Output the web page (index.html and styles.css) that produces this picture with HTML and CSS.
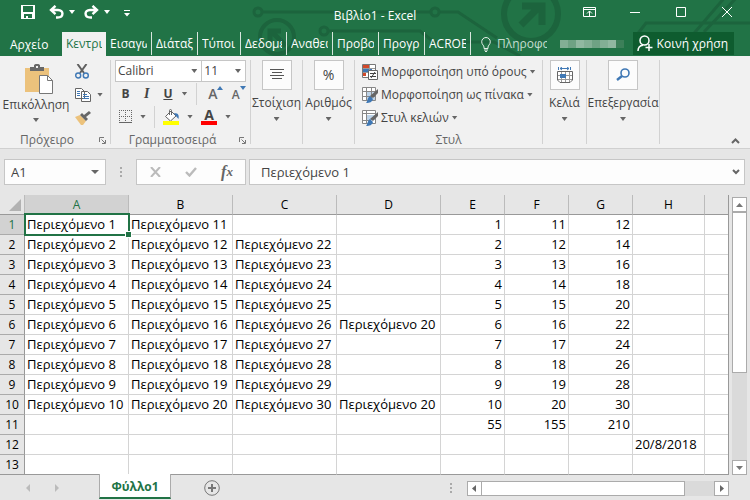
FILE: index.html
```html
<!DOCTYPE html>
<html lang="el">
<head>
<meta charset="utf-8">
<title>Βιβλίο1 - Excel</title>
<link rel="stylesheet" href="styles.css">
</head>
<body>
<div class="app">
  <header class="top">
    <svg class="circuit" width="500" height="56" viewBox="250 0 500 56" fill="none" stroke="#1c643d" stroke-width="3" aria-hidden="true">
      <circle cx="258" cy="12" r="4"/><path d="M262 12H431M439 12H458L497 38"/><circle cx="435" cy="12" r="4"/>
      <circle cx="324" cy="31" r="4"/><path d="M328 31H420L434 42H494L520 56M386 42H420"/>
      <circle cx="277" cy="37" r="17" stroke-width="4"/><path d="M286 46L271 31M270 42V31H281" stroke-width="5"/>
      <circle cx="531" cy="14" r="27" stroke-width="6"/><path d="M521 25L541 5M522 6H542V25" stroke-width="7"/>
      <path d="M636 36L646 23H750M690 38L726 -4M704 32L738 -4"/>
    </svg>
    <div class="titlebar">
      <div class="quick">
        <button class="qbtn save" aria-label="Αποθήκευση"><svg width="14" height="14" viewBox="0 0 14 14"><path fill="#fff" fill-rule="evenodd" d="M0 0H14V14H0ZM2 1V7H12V1ZM3 9V13H5V11H7V13H11V9Z"/></svg></button>
        <button class="qbtn undo" aria-label="Αναίρεση"><svg width="15" height="14" viewBox="0 0 15 14" fill="none" stroke="#fff" stroke-width="2.400"><path d="M6.500 .8L2 5L6.500 9.200M2 5H9C15 5 15 12.500 8.500 12.500H7"/></svg></button>
        <span class="tri light"></span>
        <button class="qbtn redo" aria-label="Επανάληψη"><svg width="15" height="14" viewBox="0 0 15 14" fill="none" stroke="#fff" stroke-width="2.400"><path d="M8.500 .8L13 5L8.500 9.200M13 5H6C0 5 0 12.500 6.500 12.500H8"/></svg></button>
        <span class="tri light"></span>
        <button class="qbtn more" aria-label="Προσαρμογή"><svg width="6" height="7" viewBox="0 0 6 7" fill="#fff"><path d="M0 0H6V1H0ZM0 3H6L3 6.500Z"/></svg></button>
      </div>
      <h1>Βιβλίο1 - Excel</h1>
      <div class="winctl">
        <button aria-label="Επιλογές κορδέλας"><svg width="13" height="10" viewBox="0 0 13 10" fill="none" stroke="#fff"><path d="M.5.5H12.500V9.500H.5ZM.5 2.500H12.500M6.500 9V4M4 6.500L6.500 4L9 6.500"/></svg></button>
        <button aria-label="Ελαχιστοποίηση"><svg width="10" height="10" viewBox="0 0 10 10" stroke="#fff"><path d="M0 5.500H10"/></svg></button>
        <button aria-label="Μεγιστοποίηση"><svg width="10" height="10" viewBox="0 0 10 10" fill="none" stroke="#fff"><path d="M.5.5H9.500V9.500H.5Z"/></svg></button>
        <button aria-label="Κλείσιμο"><svg width="10" height="10" viewBox="0 0 10 10" stroke="#fff"><path d="M0 0L10 10M10 0L0 10"/></svg></button>
      </div>
    </div>
    <nav class="tabs">
      <a class="file" href="#">Αρχείο</a>
      <a class="tab active" href="#"><span>Κεντρικ</span></a>
      <a class="tab" href="#"><span>Εισαγω</span></a>
      <a class="tab" href="#"><span>Διάταξ</span></a>
      <a class="tab short" href="#"><span>Τύποι</span></a>
      <a class="tab" href="#"><span>Δεδομέ</span></a>
      <a class="tab" href="#"><span>Αναθεώ</span></a>
      <a class="tab" href="#"><span>Προβο</span></a>
      <a class="tab" href="#"><span>Προγρ</span></a>
      <a class="tab" href="#"><span>ACROB</span></a>
      <a class="tell" href="#"><svg width="10" height="15" viewBox="0 0 10 15" fill="none" stroke="#e4efe8"><path d="M3 11.500V10C3 8.500.7 7.500.7 4.800A4.300 4.300 0 0 1 9.300 4.800C9.300 7.500 7 8.500 7 10V11.500ZM3 13H7M4 14.500H6"/></svg><span>Πληροφο</span></a>
      <span class="mosaic"><i></i><i></i><i></i><i></i><i></i><i></i><i></i><i></i></span>
      <button class="share"><svg width="16" height="17" viewBox="0 0 16 17" fill="none" stroke="#fff" stroke-width="1.500"><circle cx="7.500" cy="5.500" r="4.500"/><path d="M1 16C1 12.500 3 10.500 6 10.200M12 9V16M8.500 12.500H15.500"/></svg>Κοινή χρήση</button>
    </nav>
  </header>

  <section class="ribbon">
    <div class="group clip">
      <div class="content">
        <button class="big paste">
          <svg width="28" height="31" viewBox="0 0 28 31"><path fill="#ecc27c" d="M0 4H24V28H0Z"/><path fill="#686868" d="M5 7V3H9V1L10.500 0H13.500L15 1V3H19V7Z"/><path fill="#f1f1f1" d="M11 2H13V4H11Z"/><path fill="#fff" stroke="#777" d="M14.500 11.500H22.500L27.500 16.500V29.500H14.500Z"/><path fill="none" stroke="#777" d="M22.500 11.500V16.500H27.500"/></svg>
          <span>Επικόλληση</span><span class="tri"></span>
        </button>
        <div class="stack">
          <button aria-label="Αποκοπή"><svg width="14" height="15" viewBox="0 0 14 15" fill="none"><path stroke="#606060" stroke-width="2" d="M2.500 0L9 9M11.500 0L5 9"/><circle cx="3.200" cy="11.500" r="2.500" stroke="#3f78b5" stroke-width="1.400"/><circle cx="10.800" cy="11.500" r="2.500" stroke="#3f78b5" stroke-width="1.400"/></svg></button>
          <button aria-label="Αντιγραφή"><svg width="16" height="14" viewBox="0 0 16 14"><path fill="#fff" stroke="#666" d="M.5.5H6.500L9.500 3.500V10.500H.5ZM6.500 3.500H12.500L15.500 6.500V13.500H6.500Z"/><path stroke="#3f78b5" d="M2 3.500H5M2 5.500H5M2 7.500H5M8 6.500H12M8 8.500H14M8 10.500H14"/></svg><span class="tri"></span></button>
          <button aria-label="Πινέλο μορφοποίησης"><svg width="16" height="14" viewBox="0 0 16 14"><path fill="#ecc27c" d="M0 6L5 4L11 10L8 14H6Z"/><path fill="#666" d="M5 4L7 2L9 4L14 0L16 2L11 6L13 8L11 10Z"/></svg></button>
        </div>
      </div>
      <div class="caption"><span>Πρόχειρο</span><svg class="launch" width="7" height="7" viewBox="0 0 7 7" fill="none" stroke="#777"><path d="M.5 5V.5H5M2.500 2.500L6 6M6.500 3V6.500H3"/></svg></div>
    </div>

    <div class="group font">
      <div class="content rows">
        <div class="combos">
          <div class="combo face"><select aria-label="Γραμματοσειρά"><option>Calibri</option></select><span class="tri"></span></div>
          <div class="combo size"><select aria-label="Μέγεθος"><option>11</option></select><span class="tri"></span></div>
        </div>
        <div class="tools one">
          <button class="bold">B</button><button class="ital">I</button><button class="under">U</button><span class="tri"></span><span class="vline"></span>
          <button class="grow" aria-label="Μεγαλύτερα">A<svg width="6" height="4" viewBox="0 0 6 4"><path fill="#3f78b5" d="M0 4L3 0L6 4Z"/></svg></button>
          <button class="grow small" aria-label="Μικρότερα">A<svg width="6" height="4" viewBox="0 0 6 4"><path fill="#3f78b5" d="M0 0H6L3 4Z"/></svg></button>
        </div>
        <div class="tools two">
          <button aria-label="Περιγράμματα"><svg width="13" height="14" viewBox="0 0 13 14" fill="none" stroke="#666"><path stroke-dasharray="1 1" d="M0 .5H13M0 6.500H13M.5 0V12M6.500 0V12M12.500 0V12"/><path d="M0 12.500H13"/></svg></button><span class="tri"></span><span class="vline"></span>
          <button aria-label="Χρώμα γεμίσματος"><svg width="16" height="16" viewBox="0 0 16 16"><path fill="#fff" stroke="#666" d="M2.500 7.500L8 2L13 7L7.500 12ZM6.500 6V1.500Q6.500.5 7.500.5T8.500 1.500V6"/><path fill="#3f78b5" d="M11 4C16 4 16 7 15.500 10L12 6Z"/><path fill="#ff0" d="M0 12H16V16H0Z"/></svg></button><span class="tri"></span>
          <button class="colour" aria-label="Χρώμα γραμματοσειράς"><b>A</b></button><span class="tri"></span>
        </div>
      </div>
      <div class="caption"><span>Γραμματοσειρά</span><svg class="launch" width="7" height="7" viewBox="0 0 7 7" fill="none" stroke="#777"><path d="M.5 5V.5H5M2.500 2.500L6 6M6.500 3V6.500H3"/></svg></div>
    </div>

    <div class="group narrow">
      <button class="tile"><span class="frame"><svg width="14" height="12" viewBox="0 0 14 12" stroke="#555"><path d="M0 .5H14M2 3.500H12M0 6.500H14M2 9.500H12"/></svg></span><span>Στοίχιση</span><span class="tri"></span></button>
    </div>
    <div class="group narrow">
      <button class="tile"><span class="frame pct">%</span><span>Αριθμός</span><span class="tri"></span></button>
    </div>

    <div class="group styles">
      <div class="content list">
        <button><svg width="16" height="16" viewBox="0 0 16 16"><path fill="#fff" stroke="#777" d="M.5.5H13.500V13.500H.5Z"/><path fill="#d2492a" d="M1 1H7V4H1ZM1 9H4V12H1Z"/><path fill="#3f78b5" d="M1 5H10V8H1Z"/><path fill="none" stroke="#999" d="M1 4.500H13M1 8.500H8M7.500 1V8"/><path fill="#fff" stroke="#666" d="M6.500 6.500H15.500V15.500H6.500Z"/><path stroke="#444" d="M8 9.500H14M8 12.500H14M13 8L9 14"/></svg>Μορφοποίηση υπό όρους<span class="tri"></span></button>
        <button><svg width="16" height="16" viewBox="0 0 16 16"><path fill="#fff" stroke="#888" d="M.5.5H13.500V13.500H.5Z"/><path fill="#bdd3e8" d="M5 5H13V13H5Z"/><path fill="none" stroke="#888" d="M1 4.500H13M1 9.500H13M4.500 1V13M9.500 1V13"/><path fill="#666" d="M16 2V6L11 11L8 9Z"/><path fill="#3f78b5" d="M8 9L11 12C10 15 8 16 4 16C6 14 5 11 8 9Z"/></svg>Μορφοποίηση ως πίνακα<span class="tri"></span></button>
        <button><svg width="16" height="16" viewBox="0 0 16 16"><path fill="#fff" stroke="#888" d="M.5.5H13.500V13.500H.5Z"/><path fill="#bdd3e8" d="M5 5H13V10H5Z"/><path fill="none" stroke="#888" d="M1 3.500H13M1 10.500H8M4.500 1V13"/><path fill="#666" d="M16 2V6L11 11L8 9Z"/><path fill="#3f78b5" d="M8 9L11 12C10 15 8 16 4 16C6 14 5 11 8 9Z"/></svg>Στυλ κελιών<span class="tri"></span></button>
      </div>
      <div class="caption"><span>Στυλ</span></div>
    </div>

    <div class="group cells">
      <button class="tile"><span class="frame"><svg width="16" height="16" viewBox="0 0 16 16" fill="none"><path stroke="#3f78b5" d="M1.500 0V3M13.500 0V3M3 1.500H12M5 0L3 1.500L5 3M10 0L12 1.500L10 3"/><path fill="#fff" stroke="#666" d="M.5 4.500H15.500V13L13 15.500H3L.5 13Z"/><path stroke="#999" d="M1 8.500H15M1 12.500H15M4.500 5V15M8.500 5V15M12.500 5V15"/><path fill="#3f78b5" d="M3 7H9V11H3Z"/></svg></span><span>Κελιά</span><span class="tri"></span></button>
    </div>
    <div class="group edit">
      <button class="tile"><span class="frame"><svg width="14" height="14" viewBox="0 0 14 14" fill="none" stroke="#3f78b5"><circle cx="9" cy="5" r="4" stroke-width="1.600"/><path stroke-width="2.500" d="M6 8L1 12"/></svg></span><span>Επεξεργασία</span><span class="tri"></span></button>
    </div>
    <button class="collapse" aria-label="Σύμπτυξη κορδέλας"><svg width="9" height="6" viewBox="0 0 9 6" fill="none" stroke="#666" stroke-width="2"><path d="M1 5L4.500 1.500L8 5"/></svg></button>
  </section>

  <section class="formula">
    <div class="namebox"><input aria-label="Πλαίσιο ονόματος" value="A1"><span class="tri"></span></div>
    <span class="dots"><i></i><i></i><i></i></span>
    <div class="fx">
      <button aria-label="Ακύρωση"><svg width="11" height="10" viewBox="0 0 11 10" stroke="#bbb" stroke-width="2"><path d="M1 0L10 10M10 0L1 10"/></svg></button>
      <button aria-label="Εισαγωγή"><svg width="12" height="10" viewBox="0 0 12 10" fill="none" stroke="#bbb" stroke-width="2.400"><path d="M1 5L4.500 8.500L11 1"/></svg></button>
      <button class="fn" aria-label="Εισαγωγή συνάρτησης">f<small>x</small></button>
    </div>
    <div class="formulabox"><input aria-label="Γραμμή τύπων" value="Περιεχόμενο 1"><svg width="8" height="6" viewBox="0 0 8 6" fill="none" stroke="#666" stroke-width="2"><path d="M1 1L4 4L7 1"/></svg></div>
  </section>

  <main class="sheet">
    <table>
      <colgroup><col class="c-head"><col class="c-text"><col class="c-text"><col class="c-text"><col class="c-text"><col class="c-num"><col class="c-num"><col class="c-num"><col class="c-date"><col></colgroup>
      <thead><tr><th class="corner"><svg width="12" height="12" viewBox="0 0 12 12"><path fill="#b2b2b2" d="M12 0V12H0Z"/></svg></th><th class="sel">A</th><th>B</th><th>C</th><th>D</th><th>E</th><th>F</th><th>G</th><th>H</th><th></th></tr></thead>
      <tbody>
        <tr><th class="sel">1</th><td class="cursor">Περιεχόμενο 1</td><td>Περιεχόμενο 11</td><td></td><td></td><td class="n">1</td><td class="n">11</td><td class="n">12</td><td></td><td></td></tr>
        <tr><th>2</th><td>Περιεχόμενο 2</td><td>Περιεχόμενο 12</td><td>Περιεχόμενο 22</td><td></td><td class="n">2</td><td class="n">12</td><td class="n">14</td><td></td><td></td></tr>
        <tr><th>3</th><td>Περιεχόμενο 3</td><td>Περιεχόμενο 13</td><td>Περιεχόμενο 23</td><td></td><td class="n">3</td><td class="n">13</td><td class="n">16</td><td></td><td></td></tr>
        <tr><th>4</th><td>Περιεχόμενο 4</td><td>Περιεχόμενο 14</td><td>Περιεχόμενο 24</td><td></td><td class="n">4</td><td class="n">14</td><td class="n">18</td><td></td><td></td></tr>
        <tr><th>5</th><td>Περιεχόμενο 5</td><td>Περιεχόμενο 15</td><td>Περιεχόμενο 25</td><td></td><td class="n">5</td><td class="n">15</td><td class="n">20</td><td></td><td></td></tr>
        <tr><th>6</th><td>Περιεχόμενο 6</td><td>Περιεχόμενο 16</td><td>Περιεχόμενο 26</td><td>Περιεχόμενο 20</td><td class="n">6</td><td class="n">16</td><td class="n">22</td><td></td><td></td></tr>
        <tr><th>7</th><td>Περιεχόμενο 7</td><td>Περιεχόμενο 17</td><td>Περιεχόμενο 27</td><td></td><td class="n">7</td><td class="n">17</td><td class="n">24</td><td></td><td></td></tr>
        <tr><th>8</th><td>Περιεχόμενο 8</td><td>Περιεχόμενο 18</td><td>Περιεχόμενο 28</td><td></td><td class="n">8</td><td class="n">18</td><td class="n">26</td><td></td><td></td></tr>
        <tr><th>9</th><td>Περιεχόμενο 9</td><td>Περιεχόμενο 19</td><td>Περιεχόμενο 29</td><td></td><td class="n">9</td><td class="n">19</td><td class="n">28</td><td></td><td></td></tr>
        <tr><th>10</th><td>Περιεχόμενο 10</td><td>Περιεχόμενο 20</td><td>Περιεχόμενο 30</td><td>Περιεχόμενο 20</td><td class="n">10</td><td class="n">20</td><td class="n">30</td><td></td><td></td></tr>
        <tr><th>11</th><td></td><td></td><td></td><td></td><td class="n">55</td><td class="n">155</td><td class="n">210</td><td></td><td></td></tr>
        <tr><th>12</th><td></td><td></td><td></td><td></td><td></td><td></td><td></td><td>20/8/2018</td><td></td></tr>
        <tr><th>13</th><td></td><td></td><td></td><td></td><td></td><td></td><td></td><td></td><td></td></tr>
      </tbody>
    </table>
    <div class="vscroll">
      <button class="sb" aria-label="Πάνω"><svg width="7" height="4" viewBox="0 0 7 4"><path fill="#777" d="M0 4L3.500 0L7 4Z"/></svg></button>
      <span class="thumb"></span>
      <button class="sb end" aria-label="Κάτω"><svg width="7" height="4" viewBox="0 0 7 4"><path fill="#777" d="M0 0H7L3.500 4Z"/></svg></button>
    </div>
  </main>

  <footer class="bottom">
    <div class="pager"><svg width="4" height="8" viewBox="0 0 4 8"><path fill="#bbb" d="M4 0V8L0 4Z"/></svg><svg width="4" height="8" viewBox="0 0 4 8"><path fill="#bbb" d="M0 0V8L4 4Z"/></svg></div>
    <a class="sheettab" href="#">Φύλλο1</a>
    <button class="add" aria-label="Νέο φύλλο"><svg width="16" height="16" viewBox="0 0 16 16" fill="none" stroke="#777"><circle cx="8" cy="8" r="7.300"/><path stroke-width="2" d="M8 4V12M4 8H12"/></svg></button>
    <span class="dots"><i></i><i></i><i></i></span>
    <div class="hscroll">
      <button class="sb" aria-label="Αριστερά"><svg width="4" height="7" viewBox="0 0 4 7"><path fill="#666" d="M4 0V7L0 3.500Z"/></svg></button>
      <span class="thumb"></span>
      <button class="sb end" aria-label="Δεξιά"><svg width="4" height="7" viewBox="0 0 4 7"><path fill="#666" d="M0 0V7L4 3.500Z"/></svg></button>
    </div>
  </footer>
</div>
</body>
</html>
```
FILE: styles.css
```css
* { box-sizing: border-box; }
body {
  margin: 0;
  font: 12px/16px "Open Sans", "Noto Sans", sans-serif;
  color: #444;
  background: #e6e6e6;
}
button, input, select { font: inherit; color: inherit; margin: 0; padding: 0; border: 0; background: none; }
button { display: flex; align-items: center; justify-content: center; }
a { color: inherit; text-decoration: none; }
svg { display: block; flex: none; }
.app { display: flex; flex-direction: column; min-height: 100vh; }
.tri { flex: none; width: 6px; height: 4px; background: #666; clip-path: polygon(0 0, 100% 0, 50% 100%); }
.tri.light { background: #fff; }

/* title bar and tabs */
.top { position: relative; background: #217346; color: #fff; }
.circuit { position: absolute; top: 0; right: 0; }
.titlebar { position: relative; display: grid; grid-template-columns: 1fr auto 1fr; align-items: center; height: 32px; }
.titlebar h1 { margin: 0; font-size: 12px; font-weight: 400; }
.quick { display: flex; align-items: center; padding: 0 0 8px 21px; }
.undo { margin-left: 14px; }
.redo { margin-left: 9px; }
.more { margin: 3px 0 0 14px; }
.quick .tri { margin-left: 5px; }
.winctl { display: flex; justify-content: flex-end; padding-bottom: 8px; }
.winctl button { width: 46px; height: 24px; }
.tabs { position: relative; display: flex; height: 24px; align-items: stretch; line-height: 24px; }
.file { width: 62px; padding-left: 10px; line-height: 26px; }
.tab { width: 46px; height: 23px; padding: 0 4px; border-right: 1px solid #d8e6dd; }
.tab span { display: block; overflow: hidden; white-space: nowrap; }
.tab.short { width: 43px; }
.tab.active { width: 44px; height: 24px; color: #217346; background: #f1f1f1; border: 0; }
.tell { display: flex; align-items: center; gap: 6px; width: 76px; padding-left: 10px; color: #c5dccf; white-space: nowrap; }
.tell span { overflow: hidden; }
.mosaic { display: flex; align-items: center; margin-left: 13px; }
.mosaic i { width: 8px; height: 8px; background: #83af95; }
.mosaic i:nth-child(3n + 2) { background: #6fa284; }
.mosaic i:nth-child(4n + 3) { background: #91b8a1; }
.mosaic i:last-child { background: #3c8059; }
.share { gap: 4px; margin: 0 16px 1px auto; padding: 0 6px 0 4px; background: #0e5c2f; white-space: nowrap; }

/* ribbon */
.ribbon { display: flex; height: 93px; padding: 4px 0; background: #f1f1f1; border-bottom: 1px solid #d0d0d0; white-space: nowrap; }
.group { display: flex; flex-direction: column; justify-content: space-between; height: 84px; border-right: 1px solid #d2d2d2; flex: none; }
.clip { width: 111px; }
.font { width: 140px; }
.narrow { width: 52px; }
.styles { width: 188px; }
.cells { width: 44px; }
.edit { width: 73px; }
.content { display: flex; }
.caption { position: relative; display: flex; justify-content: center; padding-right: 16px; height: 8px; align-items: center; color: #666; }
.styles .caption { padding-right: 0; }
.launch { position: absolute; right: 4px; top: 1px; }
.big { flex-direction: column; justify-content: flex-start; width: 72px; padding-top: 4px; gap: 2px; }
.big .tri { margin-top: 3px; }
.paste svg { margin-left: 6px; }
.stack { display: flex; flex-direction: column; }
.stack button { justify-content: flex-start; height: 23px; padding-left: 3px; gap: 6px; }
.rows { flex-direction: column; }
.combos { display: flex; padding: 0 4px; height: 22px; }
.combo { display: flex; align-items: center; border: 1px solid #c6c6c6; background: #fff; padding: 0 4px 0 2px; }
.combo select { flex: 1; min-width: 0; appearance: none; }
.face { width: 88px; }
.size { width: 44px; border-left: 0; }
.tools { display: flex; align-items: center; height: 23px; padding-left: 8px; }
.tools .vline { width: 1px; height: 22px; background: #d2d2d2; }
.one button { width: 22px; height: 22px; padding-right: 8px; }
.one { padding-left: 7px; }
.one .bold, .one .ital, .one .under { padding-right: 6px; }
.bold, .under { font-weight: 700; }
.ital { font: italic 700 14px "Liberation Serif", serif; }
.under { text-decoration: underline; }
.one .vline { margin: 0 8px; }
.one .grow { font-size: 14px; font-weight: 600; color: #666; width: 24px; align-items: flex-start; line-height: 22px; padding: 0; }
.one .grow svg { margin-top: 3px; }
.one .small { font-size: 12px; line-height: 24px; }
.two .tri { margin-left: 8px; }
.two .vline { margin: 0 8px; }
.colour { margin-left: 8px; width: 16px; height: 16px; line-height: 12px; font-size: 14px; border-bottom: 4px solid #f00; }
.tile { flex-direction: column; }
.frame { display: flex; align-items: center; justify-content: center; width: 30px; height: 30px; margin-bottom: 5px; border: 1px solid #c6c6c6; background: #fcfcfc; }
.pct { font-size: 14px; }
.tile .tri { margin-top: 6px; }
.list { flex-direction: column; padding-left: 7px; }
.list button { height: 23px; justify-content: flex-start; gap: 3px; }
.collapse { margin: auto 10px 0 auto; }

/* formula bar */
.formula { display: flex; align-items: center; height: 46px; padding: 0 5px 0 4px; font-size: 13px; }
.namebox, .fx, .formulabox { display: flex; align-items: center; height: 26px; border: 1px solid #c6c6c6; background: #fdfdfd; }
.namebox { width: 102px; padding: 0 6px; }
.namebox input, .formulabox input { flex: 1; min-width: 0; }
.namebox .tri { width: 8px; height: 4px; }
.dots { display: flex; flex-direction: column; gap: 2px; margin: 0 14px; }
.dots i { width: 2px; height: 2px; background: #aaa; }
.fx { width: 110px; }
.fx button { flex: 1; }
.fn { font: italic 700 16px "Liberation Serif", serif; color: #666; }
.fn small { font-size: 13px; }
.formulabox { flex: 1; margin-left: 3px; padding: 0 4px 0 11px; }

/* grid */
.sheet { display: flex; font-size: 13px; }
table { flex: 1; min-width: 0; table-layout: fixed; border-collapse: separate; border-spacing: 0; color: #000; border-right: 1px solid #999; }
.c-head { width: 25px; }
.c-text { width: 104px; }
.c-num { width: 64px; }
.c-date { width: 72px; }
th, td { height: 20px; padding: 0 2px; line-height: 19px; white-space: nowrap; border-right: 1px solid #d4d4d4; border-bottom: 1px solid #d4d4d4; }
td { background: #fff; text-align: left; }
td.n { text-align: right; }
th { padding: 0; font-weight: 400; font-size: 12px; background: #e6e6e6; text-align: center; }
thead th { border-right-color: #bbb; border-bottom-color: #999; }
tbody th { border-right-color: #999; border-bottom-color: #ababab; }
tr > :last-child { border-right: 0; }
tbody tr:last-child > * { border-bottom-color: #999; }
th.sel { background: #d2d2d2; color: #217346; }
.corner svg { margin-left: 9px; }
.cursor { position: relative; }
.cursor::before { content: ""; position: absolute; inset: -2px -2px -2px -1px; border: 2px solid #217346; }
.cursor::after { content: ""; position: absolute; right: -3px; bottom: -3px; width: 5px; height: 5px; background: #217346; outline: 1px solid #fff; }
.vscroll { display: flex; flex-direction: column; width: 15px; margin: 2px 3px 0; background: #dadada; }
.sb { flex: none; width: 15px; height: 15px; border: 1px solid #ababab; background: #fff; }
.thumb { display: block; border: 1px solid #ababab; background: #fff; }
.vscroll .thumb { height: 161px; }
.end { margin-top: auto; }

/* sheet tabs */
.bottom { display: flex; align-items: flex-start; height: 25px; }
.pager { display: flex; gap: 25px; padding: 9px 0 0 26px; width: 99px; }
.sheettab { width: 72px; height: 25px; line-height: 26px; text-align: center; font-weight: 700; color: #217346; background: #fff; border: 1px solid #ababab; border-top: 0; border-bottom: 2px solid #217346; margin-top: -1px; }
.add { margin: 5px auto 0 33px; }
.bottom .dots { margin: 8px 15px 0; }
.hscroll { display: flex; width: 35%; margin: 6px 21px 0 0; background: #dadada; }
.hscroll .thumb { width: 78%; margin-left: -1px; }
.hscroll .end { margin: 0 0 0 auto; }
```
